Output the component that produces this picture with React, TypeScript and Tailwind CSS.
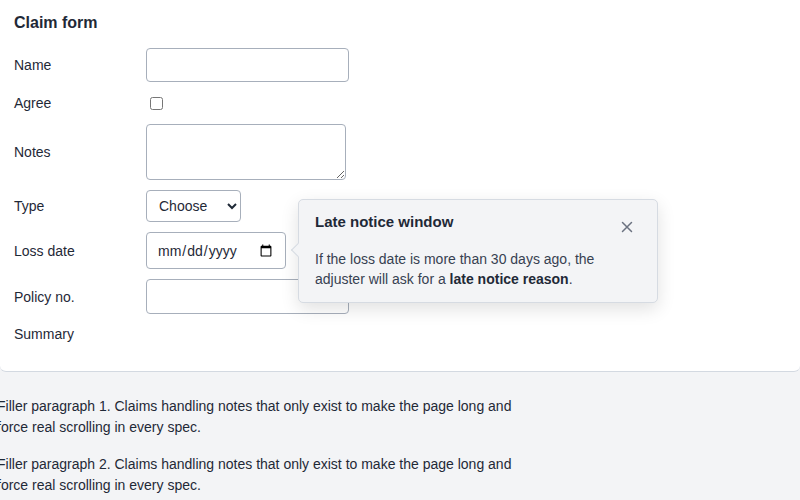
import React from "react";

export default function App() {
  const font = { fontFamily: '"Liberation Sans", Arial, sans-serif' };
  return (
    <div className="min-h-screen bg-[#f3f4f6] text-[#1f2937] overflow-hidden" style={font}>
      <div className="relative bg-white border-b border-[#d3d9e1] rounded-b-md px-[14px] pt-[13px] pb-[27px]">
        <h2 className="text-[16px] font-bold leading-[20px] mb-[15px]">Claim form</h2>
        <div className="grid grid-cols-[120px_1fr] gap-x-[12px] gap-y-[10px] text-[14px] leading-[20px] items-center">
          <label>Name</label>
          <div className="flex">
            <input type="text" className="w-[203px] h-[34px] border border-[#a7afbb] rounded-[4px] px-2 bg-white" />
          </div>
          <label>Agree</label>
          <div className="flex items-center h-[22px]">
            <input type="checkbox" className="m-0 ml-[4px] w-[13px] h-[13px]" />
          </div>
          <label>Notes</label>
          <div className="flex">
            <textarea className="w-[200px] h-[56px] border border-[#a7afbb] rounded-[4px] px-2 py-1 bg-white" />
          </div>
          <label>Type</label>
          <div className="flex">
            <select className="w-[95px] h-[32px] border border-[#a7afbb] rounded-[4px] pl-[8px] pr-[4px] bg-white">
              <option>Choose</option>
            </select>
          </div>
          <label>Loss date</label>
          <div className="flex">
            <input type="date" className="w-[140px] h-[37px] border border-[#a7afbb] rounded-[4px] px-[10px] bg-white" />
          </div>
          <label>Policy no.</label>
          <div className="flex">
            <input type="text" className="w-[203px] h-[35px] border border-[#a7afbb] rounded-[4px] px-2 bg-white" />
          </div>
          <label>Summary</label>
          <div></div>
        </div>

        <div className="absolute left-[298px] top-[199px] w-[360px] bg-[#f3f4f6] border border-[#d6dbe2] rounded-[5px] shadow-[0_6px_18px_rgba(0,0,0,0.12)] px-[16px] pt-[12px] pb-[13px]">
          <div className="absolute left-[-6px] top-[45px] w-[10px] h-[10px] bg-[#f3f4f6] border-l border-b border-[#d6dbe2] rotate-45"></div>
          <div className="flex items-start justify-between">
            <div className="text-[15px] font-bold leading-[20px] text-[#1f2937]">Late notice window</div>
            <button className="mt-[9px] mr-[8px] text-[#6b7280]" aria-label="Close">
              <svg width="12" height="12" viewBox="0 0 12 12" fill="none" stroke="currentColor" strokeWidth="1.5" strokeLinecap="round">
                <path d="M1.5 1.5 L10.5 10.5 M10.5 1.5 L1.5 10.5" />
              </svg>
            </button>
          </div>
          <p className="mt-[16px] text-[14px] leading-[20px] text-[#374151]">
            If the loss date is more than 30 days ago, the adjuster will ask for a <b className="text-[#1f2937]">late notice reason</b>.
          </p>
        </div>
      </div>

      <div className="ml-[-3px] w-[523px] pt-[24px] text-[14px] leading-[21px] text-[#1f2937]">
        {[1, 2, 3, 4, 5, 6].map((n) => (
          <p key={n} className="mb-[16px]">
            Filler paragraph {n}. Claims handling notes that only exist to make the page long and force real scrolling in every spec.
          </p>
        ))}
      </div>
    </div>
  );
}
